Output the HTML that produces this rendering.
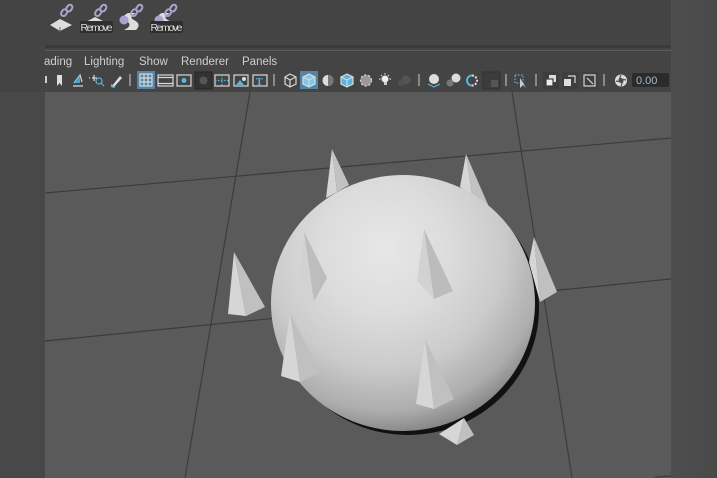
<!DOCTYPE html>
<html><head><meta charset="utf-8"><style>
html,body{margin:0;padding:0;background:#444;}
body{width:717px;height:478px;overflow:hidden;position:relative;font-family:"Liberation Sans",sans-serif;}
</style></head><body>
<svg width="717" height="478" viewBox="0 0 717 478" xmlns="http://www.w3.org/2000/svg" style="position:absolute;left:0;top:0">
<defs>
<radialGradient id="sg" gradientUnits="userSpaceOnUse" cx="385" cy="250" r="215">
<stop offset="0" stop-color="#e7e7e7"/>
<stop offset="0.3" stop-color="#dcdcdc"/>
<stop offset="0.55" stop-color="#cbcbcb"/>
<stop offset="0.75" stop-color="#adadad"/>
<stop offset="0.86" stop-color="#858585"/>
<stop offset="0.93" stop-color="#3e3e3e"/>
<stop offset="1" stop-color="#151515"/>
</radialGradient>
<linearGradient id="rs" x1="0" x2="1"><stop offset="0" stop-color="#4e4e4e"/><stop offset="1" stop-color="#494949"/></linearGradient>
</defs>
<rect x="0" y="0" width="717" height="478" fill="#444"/>
<rect x="0" y="92" width="45" height="386" fill="#484848"/>
<rect x="671" y="0" width="46" height="478" fill="url(#rs)"/>
<rect x="45" y="45" width="626" height="3" fill="#3a3a3a"/>
<rect x="45" y="50" width="626" height="1" fill="#5c5c5c"/>
<rect x="45" y="92" width="626" height="386" fill="#5a5a5a"/>
<g stroke="#3c3c3c" stroke-width="1.2" fill="none">
<line x1="250" y1="92" x2="185" y2="478"/>
<line x1="512" y1="92" x2="572" y2="478"/>
<line x1="45" y1="193" x2="671" y2="138"/>
<line x1="45" y1="341" x2="671" y2="279"/>
<line x1="655" y1="477" x2="671" y2="476"/>
</g>
<polygon points="332,149 326,198 337,192" fill="#d6d6d6"/>
<polygon points="332,149 337,192 349,185" fill="#c2c2c2"/>
<polygon points="466,154 460,187 472,195" fill="#d6d6d6"/>
<polygon points="466,154 472,195 489,207" fill="#c2c2c2"/>
<ellipse cx="408" cy="308" rx="131" ry="127" fill="#111"/>
<ellipse cx="403" cy="303" rx="132" ry="128" fill="url(#sg)"/>
<g>
<polygon points="234,252 228,314 246,316" fill="#d6d6d6"/>
<polygon points="234,252 246,316 265,307" fill="#c0c0c0"/>
<polygon points="304,232 296,298 314,301" fill="#d2d2d2"/>
<polygon points="304,232 314,301 327,278" fill="#bdbdbd"/>
<polygon points="424,229 417,281 434,299" fill="#d2d2d2"/>
<polygon points="424,229 434,299 453,291" fill="#bcbcbc"/>
<polygon points="534,237 529,262 540,302" fill="#d6d6d6"/>
<polygon points="534,237 540,302 557,292" fill="#c0c0c0"/>
<polygon points="290,313 281,376 300,382" fill="#d6d6d6"/>
<polygon points="290,313 300,382 320,372" fill="#c0c0c0"/>
<polygon points="425,339 416,404 434,409" fill="#d6d6d6"/>
<polygon points="425,339 434,409 454,399" fill="#c0c0c0"/>
<polygon points="464,418 439,434 457,445" fill="#d6d6d6"/>
<polygon points="464,418 457,445 474,435" fill="#c0c0c0"/>
</g>

<g>
<polygon points="50,25 60,19 72,25 60,31" fill="#ddd"/>
<line x1="60" y1="27" x2="60" y2="32" stroke="#666"/>
<g fill="none" stroke="#a9a4cc" stroke-width="2"><rect x="62" y="9" width="5" height="7" rx="2.5" transform="rotate(35 64 12)"/><rect x="67" y="5" width="5" height="7" rx="2.5" transform="rotate(35 70 8)"/></g>
<polygon points="84,23 95,17 107,23 96,29" fill="#ddd"/>
<g fill="none" stroke="#a9a4cc" stroke-width="2"><rect x="96" y="9" width="5" height="7" rx="2.5" transform="rotate(35 98 12)"/><rect x="101" y="5" width="5" height="7" rx="2.5" transform="rotate(35 104 8)"/></g>
<rect x="80" y="21" width="33" height="12" rx="2" fill="#2e2e2e"/>
<text x="80.5" y="31" font-size="10.5" fill="#ddd" font-family="Liberation Sans, sans-serif" textLength="32">Remove</text>
<path d="M128,13 Q121,16 127,21 Q133,26 124,30 L136,30 Q142,24 134,20 Q128,17 136,13 Z" fill="#ddd"/>
<circle cx="124" cy="20" r="4.5" fill="#aaa3d0"/>
<g fill="none" stroke="#a9a4cc" stroke-width="2"><rect x="132" y="9" width="5" height="7" rx="2.5" transform="rotate(35 134 12)"/><rect x="137" y="5" width="5" height="7" rx="2.5" transform="rotate(35 140 8)"/></g>
<path d="M162,13 Q155,16 161,21 Q167,26 158,30 L170,30 Q176,24 168,20 Q162,17 170,13 Z" fill="#ddd"/>
<circle cx="159" cy="20" r="4.5" fill="#aaa3d0"/>
<g fill="none" stroke="#a9a4cc" stroke-width="2"><rect x="166" y="9" width="5" height="7" rx="2.5" transform="rotate(35 168 12)"/><rect x="171" y="5" width="5" height="7" rx="2.5" transform="rotate(35 174 8)"/></g>
<rect x="150" y="21" width="33" height="12" rx="2" fill="#2e2e2e"/>
<text x="150.5" y="31" font-size="10.5" fill="#ddd" font-family="Liberation Sans, sans-serif" textLength="32">Remove</text>
</g>

<g font-size="11.5" fill="#cfcfcf" font-family="Liberation Sans, sans-serif">
<text x="44" y="65">ading</text>
<text x="84" y="65">Lighting</text>
<text x="139" y="65">Show</text>
<text x="181" y="65">Renderer</text>
<text x="242" y="65">Panels</text>
</g>

<g fill="none" stroke="#d8d8d8" stroke-width="1.2">
<rect x="45" y="76" width="2" height="7" fill="#ccc" stroke="none"/>
<path d="M57,75 L62,75 L62,86 L59.5,83 L57,86 Z" fill="#ddd" stroke="none"/>
<path d="M73,86 L83,86 M74,83 L80,75 L82,82" />
<path d="M74,83 L80,75 L80,83 Z" fill="#4aa3cf" stroke="none"/>
<path d="M92,78 L97,78 M94,75 L94,81 M89,78 L90,78"/>
<circle cx="99" cy="81" r="3" stroke="#59b4de"/><path d="M101,83 L104,86" stroke="#59b4de"/>
<path d="M112,86 L120,76 L122,78 L114,87 Z" fill="#ddd" stroke="none"/>
<path d="M112,84 Q110,88 115,87" stroke="#59b4de"/>
<rect x="129" y="74" width="2" height="12" fill="#888" stroke="none"/>
<rect x="137" y="71" width="18" height="18" fill="#5285a6" stroke="none"/>
<rect x="140" y="74" width="12" height="12"/><path d="M144,74 V86 M148,74 V86 M140,78 H152 M140,82 H152"/>
<rect x="158" y="75" width="15" height="11"/><path d="M158,77.5 H173 M158,83.5 H173"/>
<rect x="177" y="75" width="14" height="11"/><circle cx="184" cy="80.5" r="2.5" fill="#59b4de" stroke="none"/>
<rect x="195" y="72" width="17" height="17" fill="#333" stroke="#2a2a2a"/><circle cx="203.5" cy="80.5" r="4" fill="#555" stroke="none"/>
<rect x="215" y="75" width="14" height="11"/><path d="M215,80.5 H229 M222,75 V86" stroke="#59b4de" stroke-dasharray="1.5 1.5"/>
<rect x="234" y="75" width="14" height="11"/><path d="M236,85 L240,80 L244,85 Z" fill="#59b4de" stroke="none"/><circle cx="244" cy="79" r="2" fill="#ddd" stroke="none"/>
<rect x="253" y="75" width="14" height="11"/><text x="256" y="85" font-size="10" font-weight="bold" fill="#59b4de" stroke="none" font-family="Liberation Serif, serif">T</text>
<rect x="273" y="74" width="2" height="12" fill="#888" stroke="none"/>
<path d="M285,77 L290,74 L296,77 L296,84 L290,87 L285,84 Z M285,77 L290,80 L296,77 M290,80 V87"/>
<rect x="300" y="71" width="18" height="18" fill="#5285a6" stroke="none"/>
<path d="M303,77 L309,74 L315,77 L315,84 L309,87 L303,84 Z" fill="#7fc7ea" stroke="#ddd"/><path d="M303,77 L309,80 L315,77 M309,80 V87"/>
<circle cx="328" cy="80.5" r="5.5" fill="#ddd" stroke="none"/><path d="M328,75 A5.5,5.5 0 0 1 328,86 Z" fill="#777" stroke="none"/>
<path d="M341,77 L347,74 L353,77 L353,84 L347,87 L341,84 Z" fill="#59b4de" stroke="#ddd"/><path d="M341,77 L347,80 L353,77 M347,80 V87"/>
<circle cx="366" cy="80.5" r="5.5" fill="#999" stroke="none"/><circle cx="366" cy="80.5" r="5.5" stroke="#ddd" stroke-dasharray="2 2"/>
<circle cx="385" cy="79" r="3.5" fill="#eee" stroke="none"/><rect x="384" y="82" width="3" height="3" fill="#ccc" stroke="none"/><path d="M379,79 H380.5 M389.5,79 H391 M385,73 V74.5 M381,75 L382,76 M389,75 L388,76"/>
<circle cx="406" cy="80" r="4.5" fill="#555" stroke="none"/><circle cx="401" cy="83" r="3" fill="#505050" stroke="none"/>
<rect x="418" y="74" width="2" height="12" fill="#888" stroke="none"/>
<circle cx="434" cy="79" r="5" fill="#ddd" stroke="none"/><path d="M428,84 L434,87 L440,84" stroke="#59b4de"/>
<circle cx="456" cy="78" r="4.5" fill="#ddd" stroke="none"/><circle cx="450" cy="83" r="3.5" fill="#777" stroke="none"/>
<path d="M472,75.5 A5,5 0 1 0 472,85.5" stroke="#59b4de" stroke-width="2"/><path d="M472,75.5 A5,5 0 0 1 472,85.5" stroke="#ddd" stroke-width="2" stroke-dasharray="2 1.5"/>
<rect x="483" y="72" width="17" height="17" fill="#3c3c3c" stroke="#333"/><rect x="491" y="80" width="7" height="7" fill="#555" stroke="none"/>
<rect x="505" y="74" width="2" height="12" fill="#888" stroke="none"/>
<rect x="515" y="75" width="8" height="8" stroke="#59b4de" stroke-dasharray="1.5 1.5"/><path d="M520,78 L520,88 L523,85 L526,88 Z" fill="#ccc" stroke="none"/>
<rect x="535" y="74" width="2" height="12" fill="#888" stroke="none"/>
<rect x="543" y="72" width="16" height="17" fill="#3e3e3e" stroke="none"/><rect x="549" y="75" width="7" height="7" fill="#ddd" stroke="none"/><rect x="546" y="79" width="7" height="7" fill="#eee" stroke="#3e3e3e"/>
<rect x="562" y="72" width="16" height="17" fill="#3e3e3e" stroke="none"/><path d="M568,76 H575 V83"/><rect x="564" y="79" width="7" height="7" fill="#ddd" stroke="none"/>
<rect x="582" y="72" width="16" height="17" fill="#3e3e3e" stroke="none"/><rect x="584" y="75" width="11" height="11"/><path d="M587,78 L593,84"/>
<rect x="603" y="74" width="2" height="12" fill="#888" stroke="none"/>
<circle cx="621" cy="80.5" r="6" fill="#ddd" stroke="none"/><circle cx="621" cy="80.5" r="2.5" fill="#444" stroke="none"/><path d="M621,75 L619,80 M626,80 L621,79 M621,86 L623,81 M616,81 L621,82" stroke="#555"/>
</g>
<rect x="632" y="73" width="37" height="14" rx="2" fill="#2b2b2b"/>
<text x="636" y="84" font-size="11" fill="#a3b8cc" font-family="Liberation Sans, sans-serif">0.00</text>
</svg>
</body></html>
